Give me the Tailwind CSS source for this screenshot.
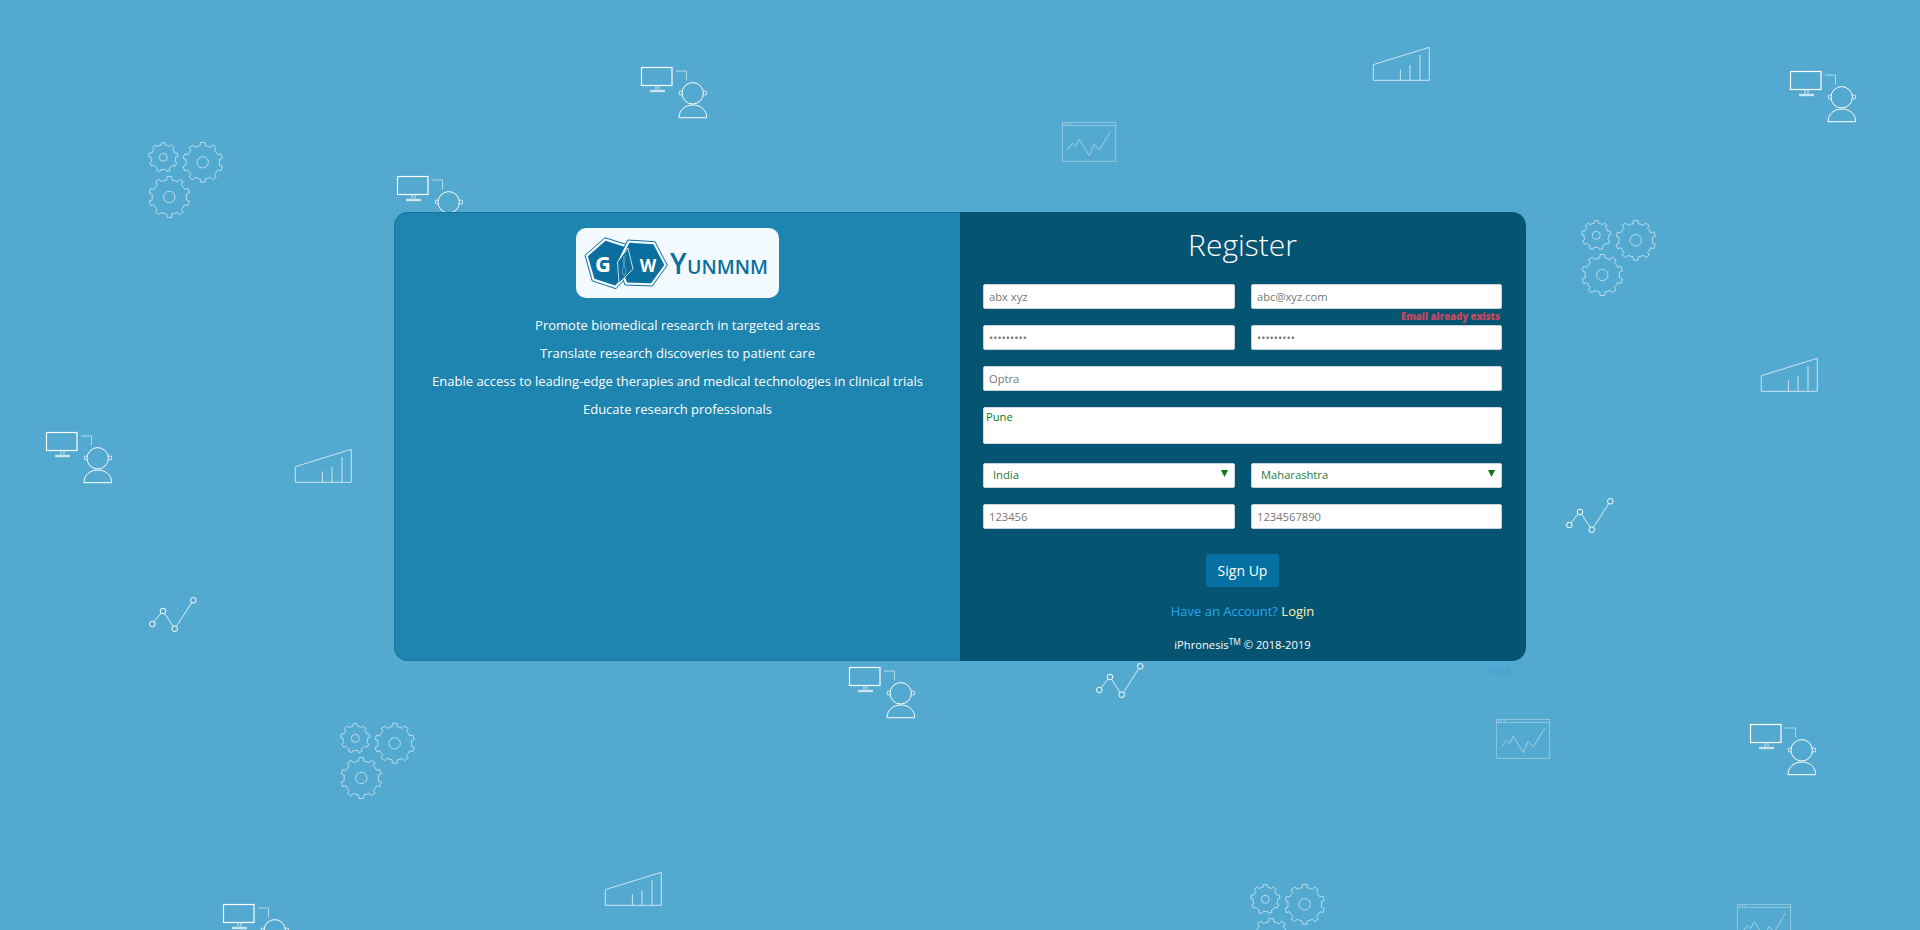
<!DOCTYPE html>
<html lang="en">
<head>
    <meta charset="UTF-8">
    <meta name="viewport" content="width=device-width, initial-scale=1.0">
    <title>Register</title>
    <script src="https://cdn.jsdelivr.net/npm/@tailwindcss/browser@4"></script>
</head>
<body class="bg-[#53a9cf] font-['Open_Sans',sans-serif]">
<div class="relative h-[930px] overflow-hidden">

    <!-- background pattern -->
    <svg class="absolute inset-0" width="1920" height="930" fill="none" stroke="#fff">
        <defs>
            <g id="person">
                <rect x="0.5" y="0.5" width="30.5" height="18" stroke-width="1.2"/>
                <path d="M15 19v3.5M18 19v3.5" stroke-width="1" opacity=".8"/>
                <path d="M9 24h15" stroke-width="2.4" opacity=".7"/>
                <path d="M35 4h10.5v9.5" stroke-width="1" opacity=".55"/>
                <circle cx="51.7" cy="26.3" r="10.7" stroke-width="1"/>
                <path d="M41 24.2h-2.6v3.6H41M62.4 24.2h3v3.6h-3" stroke-width="1" opacity=".7"/>
                <path d="M38 50.7c0-7.6 6-12.7 13.8-12.7s13.9 5.100 13.900 12.700z" stroke-width="1"/>
            </g>
            <g id="gears" stroke-width="1" opacity=".6">
                <path id="gearA"/><circle cx="14.300" cy="15.300" r="4"/>
                <path id="gearB"/><circle cx="53.700" cy="20.300" r="5.700"/>
                <path id="gearC"/><circle cx="20.300" cy="55" r="5.700"/>
            </g>
            <g id="bars" stroke-width="1" opacity=".7">
                <path d="M0.300 33.300V17.700L56.300 0.300V33.300H0.300z"/>
                <path d="M27.400 33V22.300M37 33V18M47 33V8"/>
            </g>
            <g id="browser" stroke-width="0.800" opacity=".45">
                <rect x="0.300" y="0.300" width="53.400" height="39"/>
                <path d="M0.300 3.400h53.400"/>
                <path d="M2 1.800h1M4.700 1.800h1M7.700 1.800h1" stroke-width="1.500"/>
                <path d="M5.300 28l5-6.700 3.400 3.400 3.600-7.400 10 16.400 4.700-11.400 5.300 5.700L48.700 9" stroke-width="1"/>
            </g>
            <g id="graph" stroke-width="1">
                <path d="M5 23.800l7-8.600M15.700 15.500l8.300 12.700M27.500 28.200L42.500 5" opacity=".8"/>
                <circle cx="3.300" cy="26" r="2.800"/>
                <circle cx="14" cy="13" r="2.800"/>
                <circle cx="25.700" cy="30.700" r="2.800"/>
                <circle cx="44.300" cy="2.300" r="2.800"/>
            </g>
        </defs>
        <use href="#person" x="641" y="67"/>
        <use href="#person" x="1790" y="71"/>
        <use href="#person" x="397" y="176"/>
        <use href="#person" x="46" y="432"/>
        <use href="#person" x="849" y="667"/>
        <use href="#person" x="1750" y="724"/>
        <use href="#person" x="223" y="904"/>
        <use href="#gears" x="149" y="142"/>
        <use href="#gears" x="1582" y="220"/>
        <use href="#gears" x="341" y="723"/>
        <use href="#gears" x="1251" y="884"/>
        <use href="#bars" x="1373" y="47"/>
        <use href="#bars" x="1761" y="358"/>
        <use href="#bars" x="295" y="449"/>
        <use href="#bars" x="605" y="872"/>
        <use href="#browser" x="1062" y="122"/>
        <use href="#browser" x="1496" y="719"/>
        <use href="#browser" x="1737" y="904"/>
        <use href="#graph" x="149" y="598"/>
        <use href="#graph" x="1566" y="499"/>
        <use href="#graph" x="1096" y="664"/>
    </svg>

    <div class="relative flex justify-center pt-[212px]">
        <div class="relative flex h-[449px] w-[1132px]">

            <!-- left panel -->
            <div class="w-[566px] rounded-l-[14px] border border-r-0 border-[#1a7399] bg-[#1e84b0] pt-[15px] text-center text-white">
                <div class="mx-auto h-[70px] w-[203px] rounded-[10px] bg-[#f2faff]">
                    <svg width="203" height="70" fill="none">
                        <polygon points="9,27.300 29,9.700 53,17.300 58,41.300 40,60.700 16.300,53" stroke="#0a6e9e" stroke-width="1"/>
                        <polygon points="11.900,28.200 29.500,12.700 50.700,19.400 55.100,40.500 39.200,57.600 18.400,50.800" fill="#0a6e9e"/>
                        <polygon points="51.700,12 79,13.700 91.300,37.300 76.300,58 49,57 40.700,34.700" stroke="#0a6e9e" stroke-width="1" fill="#f2faff"/>
                        <polygon points="53.400,14.800 77.400,16.300 88.300,37 75.100,55.200 51,54.400 43.700,34.700" fill="#0a6e9e"/>
                        <polygon points="52,20 57,41 43,55 41.500,34" fill="#0a6e9e" stroke="#f2faff" stroke-width="0.800"/>
                        <path d="M46 27c5 5 2 7 2 10s4 5 0 11M50 27c-5 5-2 7-2 10s-4 5 0 11" stroke="#7fb0c8" stroke-width="0.800"/>
                        <text x="27" y="44" text-anchor="middle" fill="#fff" stroke="none" font-family="Open Sans" font-weight="700" font-size="22">G</text>
                        <text x="72" y="44" text-anchor="middle" fill="#fff" stroke="none" font-family="Open Sans" font-weight="700" font-size="17">W</text>
                        <text x="94" y="45.500" fill="#0a6e9e" font-family="Open Sans" font-weight="600" font-size="28">Y</text>
                        <text x="111" y="45.500" fill="#0a6e9e" font-family="Open Sans" font-weight="600" font-size="19.500" textLength="81">UNMNM</text>
                    </svg>
                </div>
                <div class="mt-[16px] flex flex-col gap-[6px] text-[13px] leading-[22px]">
                    <p>Promote biomedical research in targeted areas</p>
                    <p>Translate research discoveries to patient care</p>
                    <p>Enable access to leading-edge therapies and medical technologies in clinical trials</p>
                    <p>Educate research professionals</p>
                </div>
            </div>

            <!-- right panel -->
            <div class="w-[566px] rounded-r-[14px] bg-[#055472] pl-[23px] pr-[24px] text-center">
                <h1 class="mt-[12px] text-[30px] font-light leading-[42px] text-white">Register</h1>
                <form class="mt-[18px] grid grid-cols-[252px_251px] gap-x-[16px] gap-y-[16px]">
                    <input type="text" value="abx xyz" class="block h-[25px] w-full rounded-[2px] border border-[#c8d3da] bg-white px-[5px] text-[11.200px] text-[#777]">
                    <div class="relative">
                        <input type="text" value="abc@xyz.com" class="block h-[25px] w-full rounded-[2px] border border-[#c8d3da] bg-white px-[5px] text-[11.200px] text-[#777]">
                        <span class="absolute right-[2px] top-[25px] text-[9.600px] font-extrabold leading-[15px] text-[#c9485f]">Email already exists</span>
                    </div>
                    <input type="password" value="123456789" class="block h-[25px] w-full rounded-[2px] border border-[#c8d3da] bg-white px-[5px] text-[11.200px] text-[#777]">
                    <input type="password" value="123456789" class="block h-[25px] w-full rounded-[2px] border border-[#c8d3da] bg-white px-[5px] text-[11.200px] text-[#777]">
                    <input type="text" value="Optra" class="col-span-2 block h-[25px] w-full rounded-[2px] border border-[#c8d3da] bg-white px-[5px] text-[11.200px] text-[#777]">
                    <textarea class="col-span-2 block h-[37px] w-full resize-none rounded-[2px] border border-[#d5dde2] bg-white px-[2px] pt-[1px] text-[11.200px] leading-[16px] text-[#0a7a0a]">Pune</textarea>
                    <div class="relative mt-[3px]">
                        <select class="block h-[25px] w-full appearance-none rounded-[2px] border border-[#c8d3da] bg-white pl-[9px] text-[11.200px] text-[#1f7a3d]">
                            <option>India</option>
                        </select>
                        <svg class="absolute right-[7px] top-[7px]" width="7" height="7"><path d="M0 0h7L3.500 7z" fill="#0a7a0a"/></svg>
                    </div>
                    <div class="relative mt-[3px]">
                        <select class="block h-[25px] w-full appearance-none rounded-[2px] border border-[#c8d3da] bg-white pl-[9px] text-[11.200px] text-[#1f7a3d]">
                            <option>Maharashtra</option>
                        </select>
                        <svg class="absolute right-[7px] top-[7px]" width="7" height="7"><path d="M0 0h7L3.500 7z" fill="#0a7a0a"/></svg>
                    </div>
                    <input type="text" value="123456" class="block h-[25px] w-full rounded-[2px] border border-[#c8d3da] bg-white px-[5px] text-[11.200px] text-[#777]">
                    <input type="text" value="1234567890" class="block h-[25px] w-full rounded-[2px] border border-[#c8d3da] bg-white px-[5px] text-[11.200px] text-[#777]">
                </form>
                <button class="mt-[25px] h-[33px] w-[73px] rounded-[3px] bg-[#0670a3] text-[14px] text-white">Sign Up</button>
                <p class="mt-[14px] text-[13px] leading-[20px] text-[#22a7f0]">Have an Account? <a class="text-[#fdf3b0]">Login</a></p>
                <p class="mt-[14px] text-[11.200px] leading-[20px] text-white">iPhronesis<sup>TM</sup> © 2018-2019</p>
            </div>
        </div>
    </div>

    <span class="absolute left-[1487px] top-[663px] text-[11px] leading-[16px] text-[#37a5dc]">V 0.6</span>
</div>

<script>
    // gear outlines, computed so each one gets evenly spaced teeth
    function gearPath(cx, cy, r, teeth) {
        const pts = [];
        const step = Math.PI * 2 / teeth;
        for (let i = 0; i < teeth; i++) {
            const a = i * step - Math.PI / 2;
            [[-0.5, 0.84], [-0.24, 0.84], [-0.18, 1], [0.18, 1], [0.24, 0.84]].forEach(([o, k]) => {
                const t = a + o * step;
                pts.push((cx + Math.cos(t) * r * k).toFixed(1) + ' ' + (cy + Math.sin(t) * r * k).toFixed(1));
            });
        }
        return 'M' + pts.join('L') + 'Z';
    }
    document.getElementById('gearA').setAttribute('d', gearPath(14.3, 15.3, 14.7, 9));
    document.getElementById('gearB').setAttribute('d', gearPath(53.7, 20.3, 20, 10));
    document.getElementById('gearC').setAttribute('d', gearPath(20.3, 55, 20.5, 10));
</script>
</body>
</html>
